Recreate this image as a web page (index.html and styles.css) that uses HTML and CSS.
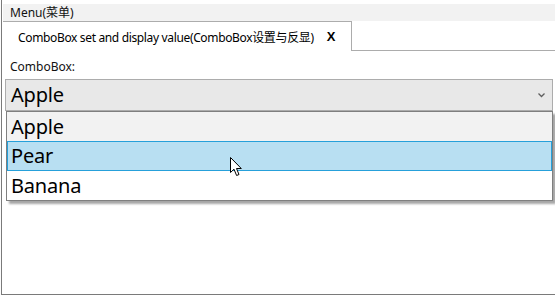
FILE: index.html
```html
<!DOCTYPE html>
<html lang="en">
<head>
  <meta charset="UTF-8">
  <title>ComboBox set and display value</title>
  <link rel="stylesheet" href="styles.css">
</head>
<body>
  <div class="window">
    <div class="menu-bar">Menu(菜单)</div>

    <div class="tab-strip">
      <div class="tab">
        <span class="tab-title">ComboBox set and display value(ComboBox设置与反显)</span>
        <span class="tab-close">X</span>
      </div>
      <div class="tab-rest"></div>
    </div>

    <div class="page">
      <label class="field-label">ComboBox:</label>
      <div class="combo">
        <div class="combo-box">
          <span class="combo-value">Apple</span>
          <svg class="combo-arrow" width="7" height="5" viewBox="0 0 7 5">
            <path d="M0.5 0.5 L3.5 3.5 L6.5 0.5" fill="none" stroke="#5f5f5f" stroke-width="1.3"/>
          </svg>
        </div>
        <div class="combo-list">
          <div class="combo-item selected">Apple</div>
          <div class="combo-item hover">Pear</div>
          <div class="combo-item">Banana</div>
        </div>
        <!-- mouse pointer over the hovered item -->
        <svg class="pointer" width="13" height="20" viewBox="0 0 13 20">
          <path d="M0.5 0.5 L0.5 15.5 L4 12.2 L6.6 18.5 L9 17.5 L6.5 11.5 L11.3 11.5 Z" fill="#fff" stroke="#000" stroke-width="1" stroke-linejoin="miter"/>
        </svg>
      </div>
    </div>
  </div>
</body>
</html>
```

FILE: styles.css
```css
body {
  margin: 0;
  background-color: #ffffff;
  font-family: "Noto Sans", "Noto Sans CJK SC", sans-serif;
  color: #000;
}

.window {
  margin-left: 1px;
  width: 560px;
  height: 295px;
  padding-top: 4px;
  box-sizing: border-box;
  border-left: 1px solid #7a7a7a;
  border-bottom: 1px solid #7a7a7a;
  box-shadow: 1px 2px 2px rgba(0, 0, 0, 0.18);
  background-color: #ffffff;
}

.menu-bar {
  margin-left: 1px;
  height: 17px;
  line-height: 17px;
  padding-left: 7px;
  font-size: 12px;
  background-color: #f2f2f2;
  color: #111;
}

.tab-strip {
  display: flex;
  height: 30px;
  margin-left: 1px;
}

.tab {
  width: 349px;
  display: flex;
  align-items: center;
  padding-left: 15px;
  box-sizing: border-box;
  border-top: 1px solid #acacac;
  border-right: 1px solid #acacac;
  font-size: 12px;
}

.tab-title {
  letter-spacing: -0.35px;
}

.tab-close {
  margin-left: 13px;
  font-weight: bold;
  font-size: 13px;
  font-family: "Liberation Sans", sans-serif;
}

.tab-rest {
  flex: 1;
  border-bottom: 1px solid #acacac;
}

.page {
  padding: 8px 0 0 3px;
}

.field-label {
  display: block;
  font-size: 12px;
  height: 20px;
  line-height: 16px;
  padding-left: 5px;
  color: #111;
}

.combo {
  position: relative;
  width: 548px;
}

.combo-box {
  height: 32px;
  box-sizing: border-box;
  border: 1px solid #acacac;
  background-color: #e8e8e8;
  display: flex;
  align-items: center;
  justify-content: space-between;
  padding: 0 7px 0 5px;
}

.combo-value {
  font-size: 20px;
  letter-spacing: -0.2px;
  line-height: 30px;
}

.combo-arrow {
  margin-top: 1px;
}

.combo-list {
  position: absolute;
  top: 32px;
  left: 1px;
  right: 0;
  border: 1px solid #7f7f7f;
  background-color: #ffffff;
  box-shadow: 3px 3px 2px rgba(0, 0, 0, 0.35);
}

.combo-item {
  height: 29px;
  line-height: 30px;
  padding-left: 4px;
  font-size: 20px;
  letter-spacing: -0.2px;
  box-sizing: border-box;
}

.combo-item.selected {
  background-color: #f2f2f2;
}

.combo-item.hover {
  height: 30px;
  background-color: #b8dff2;
  border: 1px solid #26a0da;
  padding-left: 3px;
  line-height: 28px;
}

.pointer {
  position: absolute;
  left: 225px;
  top: 78px;
}
```
